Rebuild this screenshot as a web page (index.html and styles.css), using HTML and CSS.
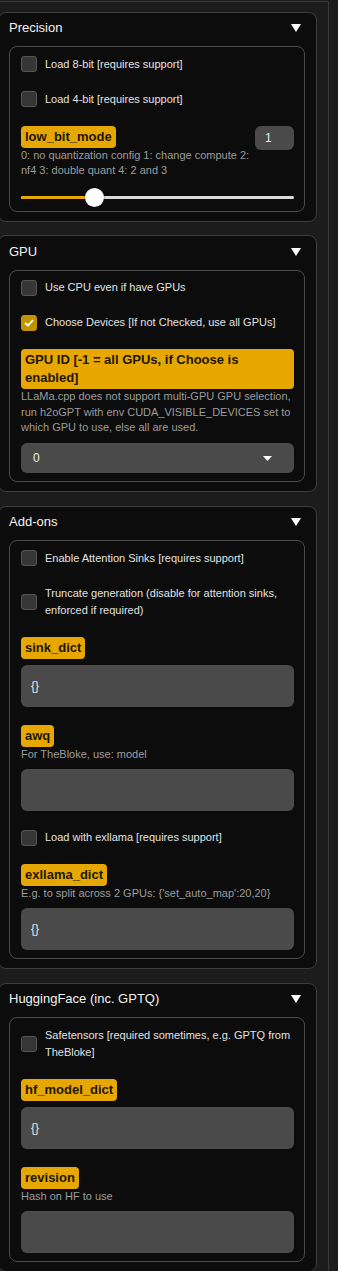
FILE: index.html
```html
<!DOCTYPE html>
<html>
<head>
	<title>Model Options</title>
	<link rel="stylesheet" href="styles.css">
</head>
<body>
	<div class="column">

		<div class="accordion">
			<div class="acc-head">
				<span>Precision</span>
				<svg class="caret" width="10" height="8" viewBox="0 0 10 8"><polygon points="0,0 10,0 5,8" fill="#fff"/></svg>
			</div>
			<div class="acc-body">
				<label class="check-row"><span class="box"></span><span>Load 8-bit [requires support]</span></label>
				<label class="check-row"><span class="box"></span><span>Load 4-bit [requires support]</span></label>
				<div class="field">
					<div class="slider-head">
						<div class="slider-text">
							<span class="tag">low_bit_mode</span>
							<div class="info">0: no quantization config 1: change compute 2: nf4 3: double quant 4: 2 and 3</div>
						</div>
						<div class="num">1</div>
					</div>
					<div class="slider">
						<div class="fill" style="width: 26.8%"></div>
						<div class="thumb" style="left: 26.8%"></div>
					</div>
				</div>
			</div>
		</div>

		<div class="accordion">
			<div class="acc-head">
				<span>GPU</span>
				<svg class="caret" width="10" height="8" viewBox="0 0 10 8"><polygon points="0,0 10,0 5,8" fill="#fff"/></svg>
			</div>
			<div class="acc-body">
				<label class="check-row"><span class="box"></span><span>Use CPU even if have GPUs</span></label>
				<label class="check-row"><span class="box checked"><svg width="10" height="8" viewBox="0 0 10 8"><polyline points="1,4 4,6.5 9,1" fill="none" stroke="#fff" stroke-width="1.8"/></svg></span><span>Choose Devices [If not Checked, use all GPUs]</span></label>
				<div class="field">
					<span class="tag">GPU ID [-1 = all GPUs, if Choose is enabled]</span>
					<div class="info">LLaMa.cpp does not support multi-GPU GPU selection, run h2oGPT with env CUDA_VISIBLE_DEVICES set to which GPU to use, else all are used.</div>
					<div class="dropdown">
						<span>0</span>
						<svg width="9" height="5" viewBox="0 0 9 5"><polygon points="0,0 9,0 4.5,5" fill="#fff"/></svg>
					</div>
				</div>
			</div>
		</div>

		<div class="accordion">
			<div class="acc-head">
				<span>Add-ons</span>
				<svg class="caret" width="10" height="8" viewBox="0 0 10 8"><polygon points="0,0 10,0 5,8" fill="#fff"/></svg>
			</div>
			<div class="acc-body">
				<label class="check-row"><span class="box"></span><span>Enable Attention Sinks [requires support]</span></label>
				<label class="check-row"><span class="box"></span><span>Truncate generation (disable for attention sinks, enforced if required)</span></label>
				<div class="field">
					<span class="tag">sink_dict</span>
					<div class="textbox">{}</div>
				</div>
				<div class="field">
					<span class="tag">awq</span>
					<div class="info">For TheBloke, use: model</div>
					<div class="textbox"></div>
				</div>
				<label class="check-row"><span class="box"></span><span>Load with exllama [requires support]</span></label>
				<div class="field">
					<span class="tag">exllama_dict</span>
					<div class="info">E.g. to split across 2 GPUs: {'set_auto_map':20,20}</div>
					<div class="textbox">{}</div>
				</div>
			</div>
		</div>

		<div class="accordion">
			<div class="acc-head">
				<span>HuggingFace (inc. GPTQ)</span>
				<svg class="caret" width="10" height="8" viewBox="0 0 10 8"><polygon points="0,0 10,0 5,8" fill="#fff"/></svg>
			</div>
			<div class="acc-body">
				<label class="check-row"><span class="box"></span><span>Safetensors [required sometimes, e.g. GPTQ from TheBloke]</span></label>
				<div class="field">
					<span class="tag">hf_model_dict</span>
					<div class="textbox">{}</div>
				</div>
				<div class="field">
					<span class="tag">revision</span>
					<div class="info">Hash on HF to use</div>
					<div class="textbox"></div>
				</div>
			</div>
		</div>

	</div>
</body>
</html>
```

FILE: styles.css
```css
body{
	margin: 0;
	background-color: #1c1c1c;
	color: #e4e4e4;
	font-family: 'Liberation Sans', Arial, sans-serif;
	font-size: 11px;
}

.column{
	box-sizing: border-box;
	width: 331px;
	margin: 1px 0 0 -2px;
	padding: 9.5px 11px 0 0;
	border-top: 1px solid #383838;
	border-right: 1px solid #383838;
	display: flex;
	flex-direction: column;
	gap: 13.5px;
}

.accordion{
	background-color: #0c0c0c;
	border: 1px solid #3e3e3e;
	border-radius: 8px;
	padding: 0 11px 9px 10px;
}

.acc-head{
	display: flex;
	justify-content: space-between;
	align-items: center;
	padding: 7.5px 4px 10px 0;
	font-size: 13px;
	line-height: 16px;
	color: #f2f2f2;
}

.caret{
	display: block;
}

.acc-body{
	display: flex;
	flex-direction: column;
	gap: 18px;
	border: 1px solid #4a4a4a;
	border-radius: 8px;
	padding: 8.5px 10px 8px 11px;
}

.check-row{
	display: flex;
	align-items: center;
	gap: 8px;
	line-height: 17px;
	color: #e2e2e2;
}

.box{
	flex: none;
	box-sizing: border-box;
	width: 16px;
	height: 16px;
	border: 1px solid #555;
	border-radius: 3px;
	background-color: #363636;
	display: flex;
	align-items: center;
	justify-content: center;
}

.box.checked{
	background-color: #c29300;
	border-color: #c29300;
}

.field{
	display: flex;
	flex-direction: column;
	align-items: flex-start;
}

.tag{
	background-color: #e6a800;
	color: #1d1600;
	font-weight: bold;
	font-size: 13px;
	line-height: 18px;
	padding: 2px 4px;
	border-radius: 4px;
}

.info{
	color: #9c9c9c;
	line-height: 15.5px;
}

.slider-head{
	align-self: stretch;
	display: flex;
	justify-content: space-between;
	align-items: flex-start;
	gap: 2px;
}

.slider-text{
	flex: 1;
	display: flex;
	flex-direction: column;
	align-items: flex-start;
}

.num{
	flex: none;
	box-sizing: border-box;
	width: 39px;
	height: 24px;
	padding-left: 10px;
	background-color: #4a4a4a;
	border-radius: 6px;
	font-size: 12px;
	line-height: 24px;
	color: #e8e8e8;
}

.slider{
	align-self: stretch;
	position: relative;
	height: 3px;
	margin: 17px 0 4px;
	background-color: #dadada;
	border-radius: 2px;
}

.fill{
	height: 100%;
	background-color: #e6a800;
	border-radius: 2px;
}

.thumb{
	position: absolute;
	top: -8px;
	width: 19px;
	height: 19px;
	margin-left: -9.5px;
	background-color: #fff;
	border-radius: 50%;
	box-shadow: 0 1px 2px rgba(0, 0, 0, 0.4);
}

.dropdown{
	align-self: stretch;
	box-sizing: border-box;
	height: 30px;
	margin-top: 7.5px;
	padding: 0 22px 0 12px;
	background-color: #4a4a4a;
	border-radius: 6px;
	display: flex;
	justify-content: space-between;
	align-items: center;
	font-size: 12px;
	color: #f0f0f0;
}

.textbox{
	align-self: stretch;
	box-sizing: border-box;
	height: 42px;
	margin-top: 6.5px;
	padding: 12px 10px;
	background-color: #4a4a4a;
	border-radius: 6px;
	font-size: 12px;
	line-height: 18px;
	color: #e8e8e8;
}
```
